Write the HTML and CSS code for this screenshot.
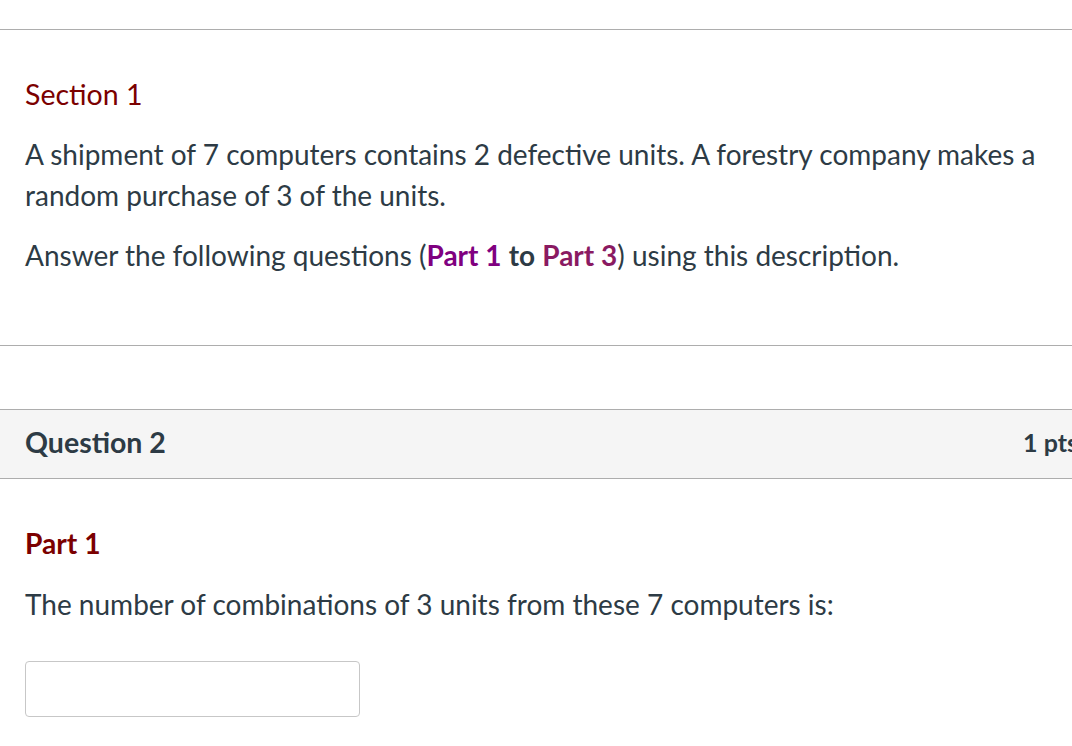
FILE: index.html
```html
<!DOCTYPE html>
<html lang="en">
<head>
<meta charset="utf-8">
<title>Quiz</title>
<link rel="stylesheet" href="styles.css">
</head>
<body>
<div class="page">
  <div class="section">
    <h2 class="section-title">Section 1</h2>
    <p class="text">A shipment of 7 computers contains 2 defective units. A forestry company makes a random purchase of 3 of the units.</p>
    <p class="text">Answer the following questions (<strong class="p1">Part 1</strong> <strong>to</strong> <strong class="p3">Part 3</strong>) using this description.</p>
  </div>
  <div class="question">
    <div class="q-header">
      <span class="q-name">Question 2</span>
      <span class="q-pts">1 pts</span>
    </div>
    <div class="q-body">
      <h3 class="part-title">Part 1</h3>
      <p class="text">The number of combinations of 3 units from these 7 computers is:</p>
      <input class="answer" type="text" aria-label="answer">
    </div>
  </div>
</div>
</body>
</html>
```

FILE: styles.css
```css
html, body {
  margin: 0;
  padding: 0;
  background: #ffffff;
  overflow: hidden;
}
body {
  font-family: Lato, "Liberation Sans", sans-serif;
  color: #2d3b45;
}
.page {
  width: 1100px;
  padding-top: 29px;
}
.section {
  border-top: 1px solid #adadad;
  border-bottom: 1px solid #adadad;
  padding: 44px 0 69px 25px;
}
.section-title {
  margin: 0 0 20px 0;
  font-size: 28.5px;
  line-height: 40px;
  font-weight: 400;
  color: #7b0000;
}
.text {
  margin: 0 0 19px 0;
  font-size: 28px;
  line-height: 41px;
  width: 1030px;
}
.section .text:last-child {
  margin-bottom: 0;
}
.p1 { color: #800080; }
.p3 { color: #8a1a62; }
strong { font-weight: 700; }
.question {
  margin-top: 63px;
}
.q-header {
  display: flex;
  justify-content: space-between;
  align-items: center;
  box-sizing: content-box;
  background: #f5f5f5;
  border-top: 1px solid #adadad;
  border-bottom: 1px solid #adadad;
  padding: 0 22px 5px 25px;
  height: 63px;
}
.q-name {
  font-size: 28.5px;
  font-weight: 700;
  color: #2d3b45;
}
.q-pts {
  font-size: 25px;
  font-weight: 700;
  color: #2d3b45;
}
.q-body {
  padding: 44px 0 0 25px;
}
.part-title {
  margin: 0 0 20px 0;
  font-size: 28.2px;
  line-height: 41px;
  font-weight: 700;
  color: #7b0000;
}
.answer {
  display: block;
  margin-top: 36px;
  width: 335px;
  height: 56px;
  box-sizing: border-box;
  border: 1px solid #c7c7c7;
  border-radius: 4px;
  background: #fff;
  font-family: inherit;
}
```
